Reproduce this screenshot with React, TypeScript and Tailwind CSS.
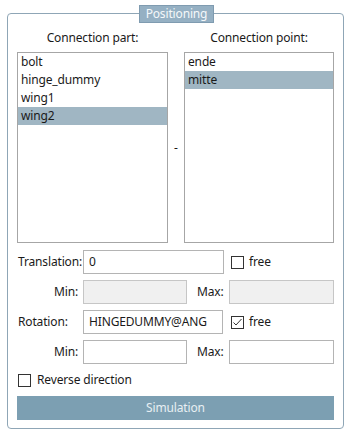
import React from "react";

const font = { fontFamily: '"Noto Sans", "Segoe UI", Arial, sans-serif', letterSpacing: "-0.15px" };

function ListBox({ items, selected, className }: { items: string[]; selected: number; className: string }) {
  return (
    <div className={"h-[191px] border border-[#a6a6a6] bg-white pt-0 " + className}>
      {items.map((it, i) => (
        <div
          key={it}
          className={
            "h-[18px] pl-[3px] text-[12px] leading-[18px] text-[#1a1a1a] " +
            (i === selected ? "bg-[#a0b6c3]" : "")
          }
        >
          {it}
        </div>
      ))}
    </div>
  );
}

function CheckBox({ checked }: { checked?: boolean }) {
  return (
    <div className="flex h-[13px] w-[13px] items-center justify-center border border-[#333] bg-white">
      {checked && (
        <svg width="11" height="11" viewBox="0 0 11 11">
          <polyline points="1.5,5.5 4,8 9.5,2" fill="none" stroke="#333" strokeWidth="1" />
        </svg>
      )}
    </div>
  );
}

function Input({ value, disabled, w }: { value?: string; disabled?: boolean; w: string }) {
  return (
    <div
      className={
        "flex h-[24px] items-center border pl-[5px] text-[12px] text-[#1a1a1a] " +
        w +
        (disabled ? " border-[#c6c6c6] bg-[#f0f0f0]" : " border-[#b4b4b4] bg-white")
      }
    >
      {value}
    </div>
  );
}

export default function App() {
  return (
    <div className="relative h-[434px] w-[349px] bg-white" style={font}>
      <div className="pl-[7px] pt-[13px]">
        <div className="relative h-[416px] w-[337px] rounded-[4px] border border-[#8fa6b6] pl-[9px]">
          <div className="absolute left-[131px] top-[-9px] flex h-[18px] w-[75px] items-center justify-center border border-[#7f9bb0] bg-[#95b0c3] text-[12px] text-[#f4f8fa]">
            Positioning
          </div>
          <div className="flex pt-[16px] text-[12px] leading-[16px] text-[#1a1a1a]">
            <div className="w-[151px] text-center">Connection part:</div>
            <div className="ml-[16px] w-[150px] text-center">Connection point:</div>
          </div>
          <div className="mt-[6px] flex items-center">
            <ListBox items={["bolt", "hinge_dummy", "wing1", "wing2"]} selected={3} className="w-[151px]" />
            <div className="w-[16px] pl-[6px] text-[12px] text-[#1a1a1a]">-</div>
            <ListBox items={["ende", "mitte"]} selected={1} className="w-[150px]" />
          </div>

          <div className="mt-[7px] flex items-center text-[12px] leading-[18px] text-[#1a1a1a]">
            <div className="w-[66px] pl-[1px]">Translation:</div>
            <Input value="0" w="w-[141px]" />
            <div className="ml-[7px]">
              <CheckBox />
            </div>
            <div className="ml-[5px]">free</div>
          </div>

          <div className="mt-[6px] flex items-center text-[12px] leading-[18px] text-[#1a1a1a]">
            <div className="w-[61px] text-right">Min:</div>
            <div className="ml-[5px]">
              <Input disabled w="w-[104px]" />
            </div>
            <div className="ml-[10px] w-[32px]">Max:</div>
            <Input disabled w="w-[105px]" />
          </div>

          <div className="mt-[6px] flex items-center text-[12px] leading-[18px] text-[#1a1a1a]">
            <div className="w-[66px] pl-[1px]">Rotation:</div>
            <Input value="HINGEDUMMY@ANG" w="w-[140px]" />
            <div className="ml-[8px]">
              <CheckBox checked />
            </div>
            <div className="ml-[5px]">free</div>
          </div>

          <div className="mt-[6px] flex items-center text-[12px] leading-[18px] text-[#1a1a1a]">
            <div className="w-[61px] text-right">Min:</div>
            <div className="ml-[5px]">
              <Input w="w-[104px]" />
            </div>
            <div className="ml-[10px] w-[32px]">Max:</div>
            <Input w="w-[105px]" />
          </div>

          <div className="mt-[7px] flex h-[18px] items-center pl-[1px] text-[12px] leading-[18px] text-[#1a1a1a]">
            <CheckBox />
            <div className="ml-[6px]">Reverse direction</div>
          </div>

          <div className="mt-[7px] flex h-[24px] w-[317px] items-center justify-center bg-[#7c9fb2] text-[12px] text-[#e8eff3]">
            Simulation
          </div>
        </div>
      </div>
    </div>
  );
}
